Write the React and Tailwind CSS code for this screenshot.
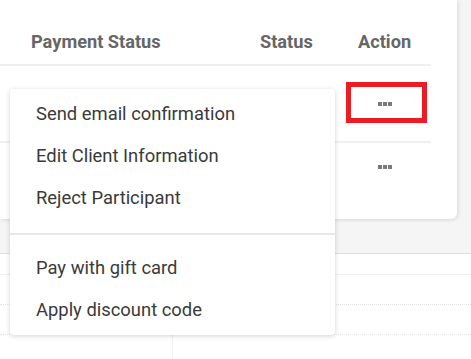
import React from "react";

function Dots() {
  return (
    <div className="flex gap-[1px]">
      <span className="w-[4px] h-[4px] bg-[#7a7a7a]" />
      <span className="w-[4px] h-[4px] bg-[#7a7a7a]" />
      <span className="w-[4px] h-[4px] bg-[#7a7a7a]" />
    </div>
  );
}

export default function App() {
  const items1 = ["Send email confirmation", "Edit Client Information", "Reject Participant"];
  const items2 = ["Pay with gift card", "Apply discount code"];
  return (
    <div
      className="relative w-[471px] h-[359px] overflow-hidden bg-[#f5f5f5]"
      style={{ fontFamily: "Roboto, 'Liberation Sans', sans-serif" }}
    >
      {/* Card */}
      <div className="w-[457px] h-[219px] bg-white rounded-br-[6px] shadow-[1px_1px_4px_rgba(0,0,0,0.12)]">
        <div className="w-[431px]">
          <div className="h-[66px] border-b-[2px] border-[#edf1f5] flex items-start pt-[30px] text-[18.2px] leading-[24px] font-bold text-[#666666]">
            <div className="w-[229px] pl-[31px] shrink-0 box-content">Payment Status</div>
            <div className="w-[98px] shrink-0">Status</div>
            <div>Action</div>
          </div>
          <div className="h-[77px] border-b-[2px] border-[#edf1f5] flex items-center">
            <div className="ml-[346px] mt-[-2px] w-[81px] h-[41px] border-[5px] border-[#ed1c24] flex items-center justify-center pr-[3px] pt-[2px]">
              <Dots />
            </div>
          </div>
          <div className="h-[52px] flex items-center">
            <div className="ml-[346px] w-[81px] flex justify-center pr-[3px] mt-[-4px]">
              <Dots />
            </div>
          </div>
        </div>
      </div>

      {/* Lower section */}
      <div className="mt-[34px] border-t border-[#dedede] bg-white h-[120px]">
        <div className="mt-[20px] border-t border-[#f0f0f0] flex h-[100px]">
          <div className="w-[173px] border-r border-[#eeeeee] flex flex-col">
            <div className="mt-[29px] border-t border-dotted border-[#e4e4e4]" />
            <div className="mt-[29px] border-t border-dotted border-[#e4e4e4]" />
          </div>
          <div className="flex-1 flex flex-col">
            <div className="mt-[29px] border-t border-dotted border-[#e4e4e4]" />
            <div className="mt-[29px] border-t border-dotted border-[#e4e4e4]" />
          </div>
        </div>
      </div>

      {/* Menu */}
      <div className="absolute left-[10px] top-[89px] w-[325px] bg-white rounded-[4px] shadow-[0_1px_5px_rgba(0,0,0,0.18)] text-[18.4px] text-[#3a3a3a]">
        <div className="pt-[4px] pb-[14px]">
          {items1.map((t) => (
            <div key={t} className="h-[42px] flex items-center pl-[26px]">{t}</div>
          ))}
        </div>
        <div className="h-[2px] bg-[#e8e8e8]" />
        <div className="pt-[12px] pb-[4px]">
          {items2.map((t) => (
            <div key={t} className="h-[42px] flex items-center pl-[26px]">{t}</div>
          ))}
        </div>
      </div>
    </div>
  );
}
